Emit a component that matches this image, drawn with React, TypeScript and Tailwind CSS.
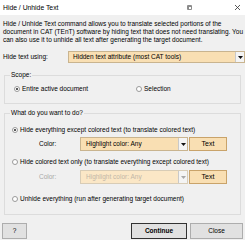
import React from 'react'

function Radio({ checked }: { checked?: boolean }) {
  return (
    <span className="flex h-[6px] w-[6px] shrink-0 items-center justify-center rounded-full border border-[#9a9a9a] bg-white">
      {checked && <span className="h-[2px] w-[2px] rounded-full bg-[#222]" />}
    </span>
  )
}

function Arrow({ disabled }: { disabled?: boolean }) {
  return (
    <span className="flex h-full w-[9px] items-center justify-center border-l border-[#c9c9c9] bg-[#f4f4f4]">
      <svg width="5" height="3" viewBox="0 0 5 3">
        <path d="M0 0h5L2.5 3z" fill={disabled ? '#a8a8a8' : '#111'} />
      </svg>
    </span>
  )
}

function ColorRow({ disabled }: { disabled?: boolean }) {
  return (
    <div className="flex h-[14px] items-center">
      <span className={`box-content w-[41px] pl-[34px] ${disabled ? 'text-[#a8a8a8]' : ''}`}>Color:</span>
      <div
        className={`flex h-full w-[108px] items-center justify-between border pl-[5px] ${
          disabled ? 'border-[#d8ccb6] bg-[#fbe7c6]' : 'border-[#c9b48f] bg-[#f9dfb3]'
        }`}
      >
        <span className={disabled ? 'text-[#c2b7a6]' : ''}>Highlight color: Any</span>
        <Arrow disabled={disabled} />
      </div>
      <button className="ml-[1px] h-full w-[38px] border border-[#c9a36a] bg-[#f9dfb3] text-[7px]">
        Text
      </button>
    </div>
  )
}

export default function App() {
  return (
    <div className="h-[240px] w-[245px] overflow-hidden bg-[#f0f0f0] font-['Liberation_Sans',Arial,sans-serif] text-[6.5px] leading-[8px] whitespace-nowrap text-black">
      <div className="flex h-[15px] items-center bg-white pl-[3px] pr-[4px]">
        <span className="text-[6.8px]">Hide / Unhide Text</span>
        <span className="ml-auto mr-[42px] flex h-[5px] w-[5px] items-center justify-center rounded-[1px] bg-[#8c8c8c]">
          <span className="h-[2px] w-[2px] bg-white" />
        </span>
        <svg width="7" height="7" viewBox="0 0 7 7">
          <path d="M1 1l5 5M6 1l-5 5" stroke="#333" strokeWidth="0.8" />
        </svg>
      </div>

      <p className="px-[3px] pt-[5px]">
        Hide / Unhide Text command allows you to translate selected portions of the
        <br />
        document in CAT (TEnT) software by hiding text that does not need translating. You
        <br />
        can also use it to unhide all text after generating the target document.
      </p>

      <div className="mt-[7px] flex h-[12px] items-center pl-[3px]">
        <span className="w-[65px]">Hide text using:</span>
        <div className="flex h-full flex-1 items-center justify-between border border-[#c9b48f] bg-[#f9dfb3] pl-[4px]">
          <span>Hidden text attribute (most CAT tools)</span>
          <Arrow />
        </div>
      </div>

      <fieldset className="mx-[4px] mt-[8px] border border-[#dcdcdc] pb-[10px]">
        <legend className="ml-[5px] px-[1px]">Scope:</legend>
        <div className="mt-[6px] flex h-[8px] items-center">
          <div className="ml-[9px] flex w-[122px] items-center gap-[2px]">
            <Radio checked />
            <span>Entire active document</span>
          </div>
          <div className="flex items-center gap-[2px]">
            <Radio />
            <span>Selection</span>
          </div>
        </div>
      </fieldset>

      <fieldset className="mx-[4px] mt-[5px] border border-[#dcdcdc] pb-[11px]">
        <legend className="ml-[5px] px-[1px]">What do you want to do?</legend>
        <div className="mt-[9px] flex h-[8px] items-center gap-[2px] pl-[7px]">
          <Radio checked />
          <span>Hide everything except colored text (to translate colored text)</span>
        </div>
        <div className="mt-[3px]">
          <ColorRow />
        </div>
        <div className="mt-[7px] flex h-[8px] items-center gap-[2px] pl-[7px]">
          <Radio />
          <span>Hide colored text only (to translate everything except colored text)</span>
        </div>
        <div className="mt-[4px]">
          <ColorRow disabled />
        </div>
        <div className="mt-[11px] flex h-[8px] items-center gap-[2px] pl-[7px]">
          <Radio />
          <span>Unhide everything (run after generating target document)</span>
        </div>
      </fieldset>

      <div className="mt-[8px] flex h-[16px] items-stretch px-[2px]">
        <button className="w-[25px] border border-[#adadad] bg-[#e1e1e1]">?</button>
        <button className="ml-auto w-[56px] border border-[#333] bg-[#e1e1e1] font-bold">Continue</button>
        <button className="ml-[3px] w-[53px] border border-[#adadad] bg-[#e1e1e1]">Close</button>
      </div>
    </div>
  )
}
